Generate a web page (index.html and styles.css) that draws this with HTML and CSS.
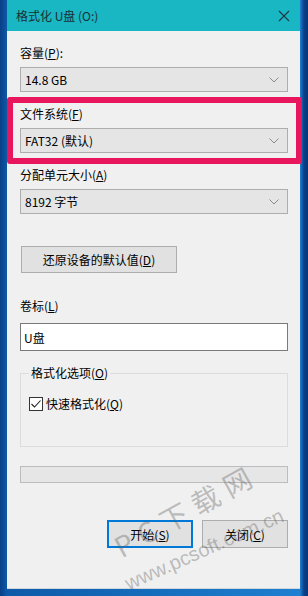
FILE: index.html
```html
<!DOCTYPE html>
<html lang="zh-CN">
<head>
<meta charset="utf-8">
<title>格式化 U盘 (O:)</title>
<link rel="stylesheet" href="styles.css">
</head>
<body>
<div class="desktop">
  <div class="window">
    <div class="titlebar">
      <span class="title">格式化 U盘 (O:)</span>
      <svg class="close" width="12" height="12" viewBox="0 0 12 12"><path d="M1 1 L11 11 M11 1 L1 11" stroke="#1d3a44" stroke-width="1.2" fill="none"/></svg>
    </div>
    <div class="content">
      <div class="label lbl-first">容量(<u>P</u>):</div>
      <div class="combo"><span>14.8 GB</span><svg class="chev" width="10" height="6" viewBox="0 0 10 6"><path d="M0.5 0.5 L5 5 L9.5 0.5" stroke="#8a8a8a" fill="none"/></svg></div>

      <div class="label lbl">文件系统(<u>F</u>)</div>
      <div class="combo"><span>FAT32 (默认)</span><svg class="chev" width="10" height="6" viewBox="0 0 10 6"><path d="M0.5 0.5 L5 5 L9.5 0.5" stroke="#8a8a8a" fill="none"/></svg></div>

      <div class="label lbl">分配单元大小(<u>A</u>)</div>
      <div class="combo"><span>8192 字节</span><svg class="chev" width="10" height="6" viewBox="0 0 10 6"><path d="M0.5 0.5 L5 5 L9.5 0.5" stroke="#8a8a8a" fill="none"/></svg></div>

      <div class="btn restore">还原设备的默认值(<u>D</u>)</div>

      <div class="label lbl-vol">卷标(<u>L</u>)</div>
      <div class="textbox">U盘</div>

      <fieldset class="group">
        <legend>格式化选项(<u>O</u>)</legend>
        <div class="check">
          <svg class="box" width="14" height="14" viewBox="0 0 14 14"><rect x="0.5" y="0.5" width="13" height="13" fill="#fff" stroke="#333"/><path d="M2.5 7 L5.5 10 L11.5 3.5" stroke="#222" stroke-width="1.1" fill="none"/></svg>
          <span>快速格式化(<u>Q</u>)</span>
        </div>
      </fieldset>

      <div class="progress"></div>

      <div class="actions">
        <div class="btn action primary">开始(<u>S</u>)</div>
        <div class="btn action">关闭(<u>C</u>)</div>
      </div>
    </div>
  </div>
  <div class="highlight"></div>
  <span class="wm-big">PC下载网</span>
  <span class="wm-url">www.pcsoft.com.cn</span>
</div>
</body>
</html>
```
FILE: styles.css
```css
html, body {
  margin: 0;
  padding: 0;
}
body {
  width: 308px;
  height: 596px;
  overflow: hidden;
  font-family: "Noto Sans CJK SC", "Noto Sans", sans-serif;
  font-size: 12px;
  color: #000;
}
.desktop {
  position: relative;
  width: 308px;
  height: 596px;
  overflow: hidden;
  background: linear-gradient(90deg, #0a3f86 0px, #0d5aa8 7px, #1f7fd0 300px, #0b3f8a 304px, #0a3576 308px);
  padding: 0 8px 8px 7px;
  box-sizing: border-box;
}
.window {
  width: 293px;
  height: 588px;
  background: #f0f0f0;
  box-shadow: 0 1px 0 #cfd6dc;
  display: flex;
  flex-direction: column;
}
.titlebar {
  height: 31px;
  background: #19b6c3;
  display: flex;
  align-items: center;
  justify-content: space-between;
  padding: 0 10px 0 9px;
  flex: none;
}
.title {
  color: #1c2f33;
  font-size: 12px;
  line-height: 16px;
}
.content {
  display: flex;
  flex-direction: column;
  padding: 0 12px 0 13px;
}
.label {
  line-height: 16px;
  height: 16px;
}
.lbl-first { margin-top: 14px; }
.lbl { margin-top: 14px; }
.lbl-vol { margin-top: 25px; }
u { text-decoration: underline; text-underline-offset: 1px; }
.combo {
  margin-top: 6px;
  height: 25px;
  box-sizing: border-box;
  border: 1px solid #adadad;
  background: #e5e5e5;
  display: flex;
  align-items: center;
  justify-content: space-between;
  padding: 0 8px 0 4px;
}
.chev { flex: none; }
.btn {
  box-sizing: border-box;
  border: 1px solid #adadad;
  background: #e1e1e1;
  display: flex;
  align-items: center;
  justify-content: center;
}
.restore {
  margin-top: 32px;
  margin-left: 1px;
  width: 156px;
  height: 27px;
}
.textbox {
  margin-top: 9px;
  height: 28px;
  box-sizing: border-box;
  border: 1px solid #7a7a7a;
  background: #fff;
  display: flex;
  align-items: center;
  padding-left: 3px;
}
.group {
  margin: 14px 0 0 0;
  padding: 0 8px;
  height: 82px;
  box-sizing: border-box;
  border: 1px solid #dcdcdc;
  min-width: 0;
}
.group legend {
  padding: 0 2px;
  line-height: 16px;
}
.check {
  margin-top: 14px;
  display: flex;
  align-items: center;
  gap: 3px;
}
.box { flex: none; }
.progress {
  margin-top: 19px;
  height: 17px;
  box-sizing: border-box;
  border: 1px solid #bcbcbc;
  background: #e6e6e6;
}
.actions {
  margin-top: 37px;
  display: flex;
  justify-content: flex-end;
  gap: 9px;
}
.action {
  width: 86px;
  height: 28px;
}
.primary {
  border: 2px solid #0078d7;
}
.highlight {
  position: absolute;
  left: 7px;
  top: 97px;
  width: 295px;
  height: 67px;
  box-sizing: border-box;
  border: 6px solid #e8175d;
  border-radius: 3px;
}
.wm-big {
  position: absolute;
  left: 116px;
  top: 531px;
  font-size: 28px;
  line-height: 34px;
  letter-spacing: 8px;
  color: rgba(100, 100, 100, 0.4);
  white-space: nowrap;
  transform: rotate(-29deg);
  transform-origin: left center;
  pointer-events: none;
}
.wm-url {
  position: absolute;
  left: 126px;
  top: 572px;
  font-size: 20px;
  line-height: 24px;
  color: rgba(100, 100, 100, 0.4);
  white-space: nowrap;
  font-family: "Liberation Sans", sans-serif;
  transform: rotate(-24deg);
  transform-origin: left center;
  pointer-events: none;
}
```
